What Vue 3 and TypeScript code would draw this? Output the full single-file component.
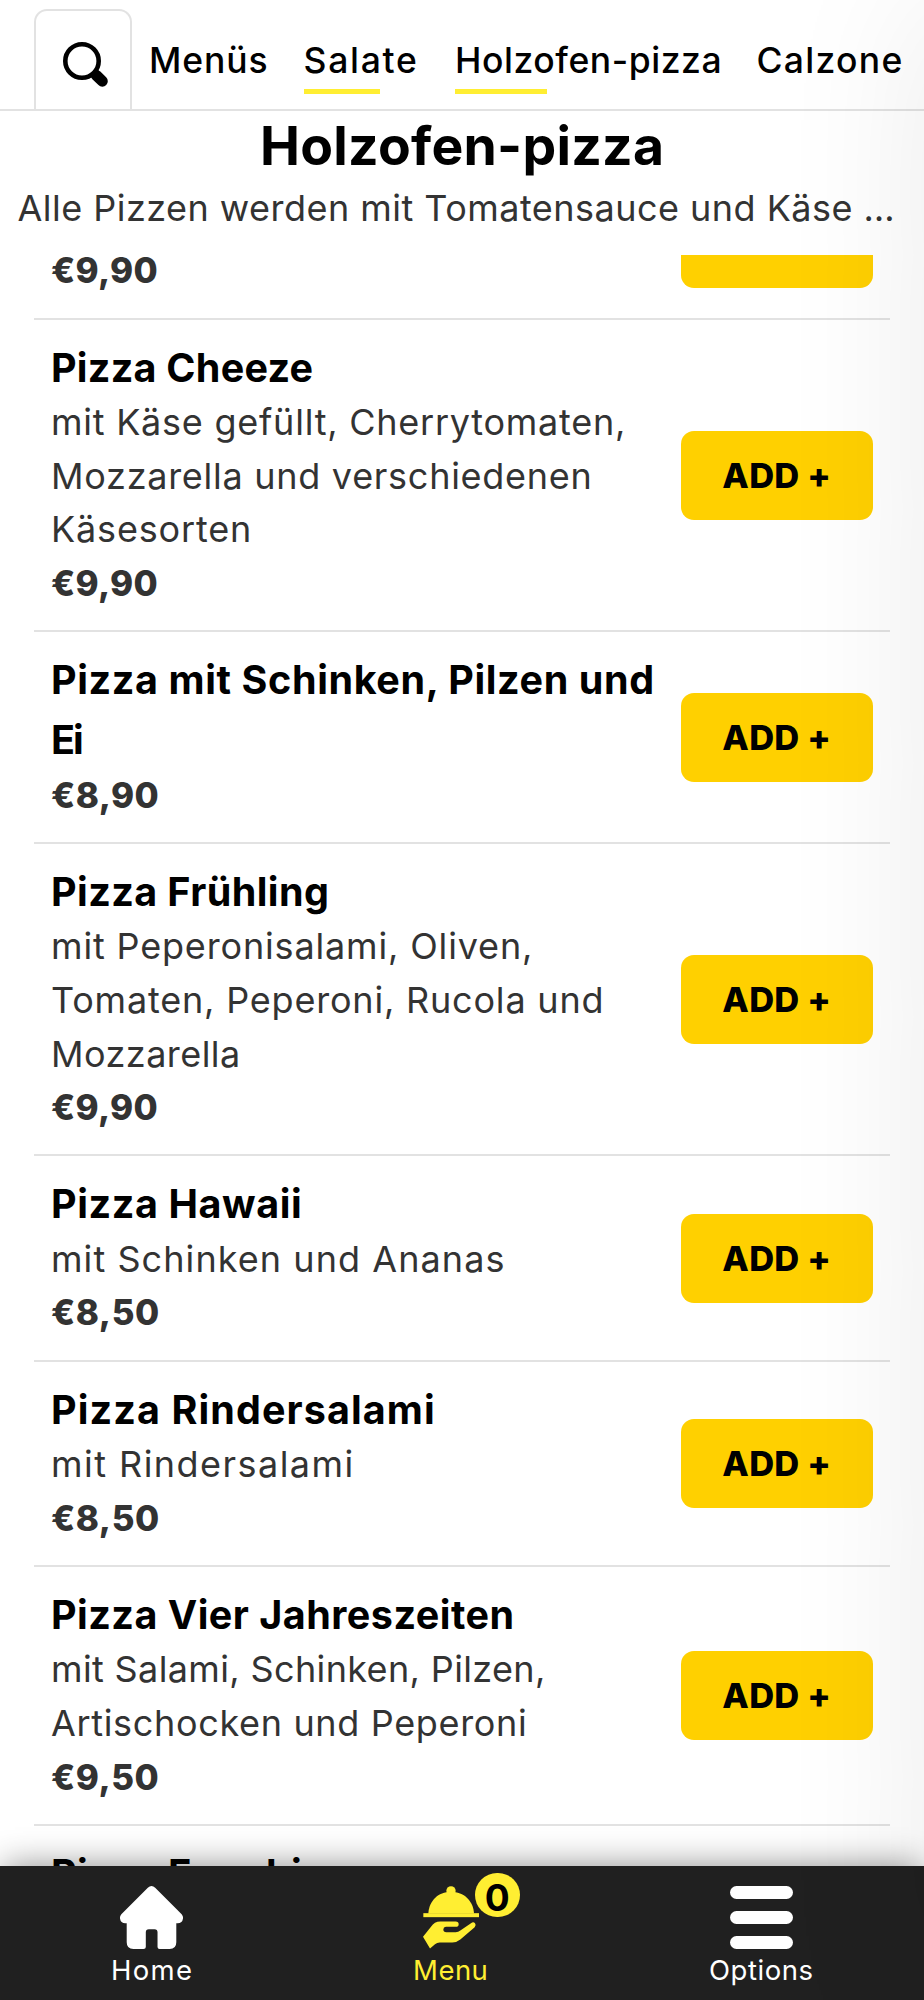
<script setup lang="ts">
import type { Directive } from 'vue'

interface Line {
  text: string
  width: number
}

interface Dish {
  id: number
  title: Line[]
  description: Line[]
  price: Line
}

interface Category {
  name: Line
  key: string
  underlined: boolean
}

const line = (text: string, width: number): Line => ({ text, width })

// Tracks a line of text out or in so that its glyphs span the given measure.
const vFit: Directive<HTMLElement, number> = {
  mounted(el, binding) {
    const text = (el.textContent ?? '').trim()
    const context = document.createElement('canvas').getContext('2d')
    if (!context || text.length < 2) return
    const style = getComputedStyle(el)
    context.font = `${style.fontWeight} ${style.fontSize} ${style.fontFamily}`
    const metrics = context.measureText(text)
    const ink = metrics.actualBoundingBoxRight + metrics.actualBoundingBoxLeft
    const spacing = (binding.value - ink) / (text.length - 1)
    el.style.letterSpacing = `${spacing.toFixed(3)}px`
    el.style.marginRight = `${(-spacing).toFixed(3)}px`
  },
}

const categories: Category[] = [
  { name: line('Menüs', 115.5), key: 'menus', underlined: false },
  { name: line('Salate', 111.5), key: 'salads', underlined: true },
  { name: line('Holzofen-pizza', 262.5), key: 'pizza', underlined: true },
  { name: line('Calzone', 144), key: 'calzone', underlined: false },
]

const dishes: Dish[] = [
  { id: 0, title: [], description: [], price: line('€9,90', 104.5) },
  {
    id: 1,
    title: [line('Pizza Cheeze', 259.5)],
    description: [
      line('mit Käse gefüllt, Cherrytomaten,', 570),
      line('Mozzarella und verschiedenen', 535.5),
      line('Käsesorten', 195),
    ],
    price: line('€9,90', 104.5),
  },
  {
    id: 2,
    title: [line('Pizza mit Schinken, Pilzen und', 600.5), line('Ei', 29)],
    description: [],
    price: line('€8,90', 105.5),
  },
  {
    id: 3,
    title: [line('Pizza Frühling', 274)],
    description: [
      line('mit Peperonisalami, Oliven,', 477),
      line('Tomaten, Peperoni, Rucola und', 549.5),
      line('Mozzarella', 184),
    ],
    price: line('€9,90', 104.5),
  },
  {
    id: 4,
    title: [line('Pizza Hawaii', 247)],
    description: [line('mit Schinken und Ananas', 450.5)],
    price: line('€8,50', 106),
  },
  {
    id: 5,
    title: [line('Pizza Rindersalami', 380)],
    description: [line('mit Rindersalami', 298.5)],
    price: line('€8,50', 106),
  },
  {
    id: 6,
    title: [line('Pizza Vier Jahreszeiten', 459.5)],
    description: [
      line('mit Salami, Schinken, Pilzen,', 490),
      line('Artischocken und Peperoni', 474),
    ],
    price: line('€9,50', 105.5),
  },
]
</script>

<template>
  <div class="screen">
    <header class="topbar">
      <button class="search" aria-label="Suche">
        <svg viewBox="0 0 45 45" width="45" height="45">
          <circle cx="19" cy="19" r="16.7" fill="none" stroke="#000" stroke-width="4.6" />
          <path d="M33.5 33.5L39.3 39.2" stroke="#000" stroke-width="11" stroke-linecap="round" />
          <path d="M28 35L35 28" stroke="#000" stroke-width="3" />
        </svg>
      </button>
      <nav class="categories">
        <a v-for="c in categories" :key="c.key" class="category" :class="c.key">
          <span v-fit="c.name.width">{{ c.name.text }}</span>
          <i v-if="c.underlined" class="underline"></i>
        </a>
      </nav>
    </header>

    <section class="intro">
      <h1><span v-fit="398">Holzofen-pizza</span></h1>
      <p><span v-fit="875">Alle Pizzen werden mit Tomatensauce und Käse …</span></p>
    </section>

    <main class="list">
      <article v-for="(dish, i) in dishes" :key="dish.id" class="dish">
        <div class="info">
          <h2>
            <span v-for="l in dish.title" :key="l.text" v-fit="l.width">{{ l.text }}</span>
          </h2>
          <div class="details">
            <p v-for="l in dish.description" :key="l.text" v-fit="l.width">{{ l.text }}</p>
            <p v-fit="dish.price.width" class="price">{{ dish.price.text }}</p>
          </div>
        </div>
        <button class="add"><span v-if="i > 0" v-fit="106">ADD +</span></button>
      </article>
      <article class="dish">
        <div class="info">
          <h2><span v-fit="247">Pizza Funghi</span></h2>
        </div>
      </article>
    </main>

    <footer class="tabbar">
      <a class="tab">
        <svg viewBox="0 0 188 188" width="63" height="63" fill="#fff">
          <path
            d="M83 5Q94 -5 105 5L184 84Q189 90 188 97Q186 111 172 111H168V168Q168 188 148 188H118Q112 188 112 182V138Q112 129 103 129H86Q77 129 77 138V182Q77 188 70 188H40Q20 188 20 168V111H16Q2 111 0 97Q-1 90 4 84Z"
          />
        </svg>
        <span v-fit="78">Home</span>
      </a>
      <a class="tab active">
        <div class="cloche">
          <svg viewBox="0 0 168 188" width="56" height="63" fill="#ffee32">
            <circle cx="84" cy="14" r="14" />
            <path d="M16 82C18 45 45 17 84 17C123 17 151 45 153 82Z" />
            <rect x="1" y="81" width="167" height="12" />
            <path
              d="M0 152L24 122Q34 106 52 106H98Q107 106 107 114Q107 122 98 122H69Q61 123 61 130Q61 138 70 138H98Q106 138 112 133L144 111Q151 106 156 111Q161 117 155 123L112 160Q101 169 88 169H50Q42 169 36 174L21 187Z"
            />
          </svg>
          <b class="badge">0</b>
        </div>
        <span v-fit="71.5">Menu</span>
      </a>
      <a class="tab">
        <svg viewBox="0 0 63 63" width="63" height="63" fill="#fff">
          <rect y="0" width="63" height="13" rx="6.5" />
          <rect y="25" width="63" height="13" rx="6.5" />
          <rect y="50" width="63" height="13" rx="6.5" />
        </svg>
        <span v-fit="102.5">Options</span>
      </a>
    </footer>
    <div class="drawer"></div>
  </div>
</template>

<style>
body {
  margin: 0;
  background: #fff;
}
</style>

<style scoped>
.screen {
  position: relative;
  display: flex;
  flex-direction: column;
  width: 924px;
  height: 2000px;
  overflow: hidden;
  background: #fff;
  color: #000;
  font-family: Inter, "Liberation Sans", sans-serif;
  font-kerning: normal;
  white-space: nowrap;
}
h1,
h2,
p {
  margin: 0;
}
button {
  padding: 0;
  border: 0;
  color: inherit;
  font-family: inherit;
}
.topbar {
  display: flex;
  align-items: flex-end;
  box-sizing: border-box;
  height: 111px;
  padding-left: 34px;
  border-bottom: 2px solid #e2e2e2;
}
.search {
  display: flex;
  align-items: flex-start;
  box-sizing: border-box;
  width: 98px;
  height: 100px;
  padding: 31px 0 22px 26.5px;
  border: 2px solid #e2e2e2;
  border-bottom: 0;
  border-radius: 13px 13px 0 0;
  background: none;
}
.search svg {
  display: block;
}
.categories {
  display: flex;
  height: 75px;
  margin-left: 17px;
}
.category {
  display: block;
  font-size: 35.5px;
  font-weight: 500;
  line-height: 54px;
}
.category > span {
  display: block;
}
.menus {
  width: 154.5px;
}
.salads {
  width: 151.5px;
}
.pizza {
  width: 301.5px;
}
.underline {
  display: block;
  width: 76px;
  height: 5px;
  margin-top: 1px;
  background: #ffee32;
}
.pizza .underline {
  width: 92px;
}
.intro {
  height: 143.8px;
  text-align: center;
}
.intro h1 {
  font-size: 53.5px;
  font-weight: 700;
  line-height: 69px;
}
.intro p {
  padding: 1px 0 0 17.5px;
  color: #333;
  font-size: 36px;
  line-height: 54px;
  text-align: left;
}
.list {
  flex: 1;
  min-height: 0;
  padding: 0 34px;
  overflow: hidden;
}
.dish {
  display: flex;
  align-items: center;
  justify-content: space-between;
  box-sizing: border-box;
  padding: 17.95px 17.3px 17.95px 17px;
  border-bottom: 2px solid #e2e2e2;
}
.dish:first-child {
  margin-top: -86.9px;
}
.info {
  width: 610px;
}
.dish h2 {
  min-height: 60.2px;
  font-size: 39.5px;
  font-weight: 700;
  line-height: 60.2px;
}
.dish h2 span {
  display: block;
}
.details {
  margin: -1.7px 0 1.7px;
  color: #333;
  font-size: 36px;
  line-height: 53.6px;
}
.price {
  font-size: 35px;
  font-weight: 800;
}
.add {
  width: 192px;
  height: 89px;
  margin-top: 1px;
  border-radius: 13px;
  background: #ffd000;
  font-size: 34.5px;
  font-weight: 800;
  line-height: 85px;
}
.tabbar {
  position: relative;
  display: grid;
  grid-template-columns: 303px 295px 326px;
  box-sizing: border-box;
  height: 134px;
  padding-top: 20px;
  background: #202020;
  box-shadow: 0 -4px 32px -4px rgba(0, 0, 0, 0.45);
}
.tab {
  display: flex;
  flex-direction: column;
  align-items: center;
  color: #fff;
  font-size: 27.5px;
  line-height: 38px;
}
.tab svg {
  display: block;
  margin-bottom: 2px;
}
.active {
  color: #ffee32;
}
.cloche {
  position: relative;
}
.badge {
  position: absolute;
  top: -13.5px;
  left: 52.5px;
  width: 44.6px;
  height: 44.6px;
  border-radius: 50%;
  background: #ffee32;
  color: #000;
  font-size: 37px;
  font-weight: 700;
  line-height: 49px;
  text-align: center;
}
/* Closed options drawer, parked beyond the right edge; only its shadow shows. */
.drawer {
  position: absolute;
  top: 0;
  bottom: 0;
  left: 100%;
  width: 300px;
  box-shadow: 0 0 150px rgba(0, 0, 0, 0.085);
  pointer-events: none;
}
</style>
